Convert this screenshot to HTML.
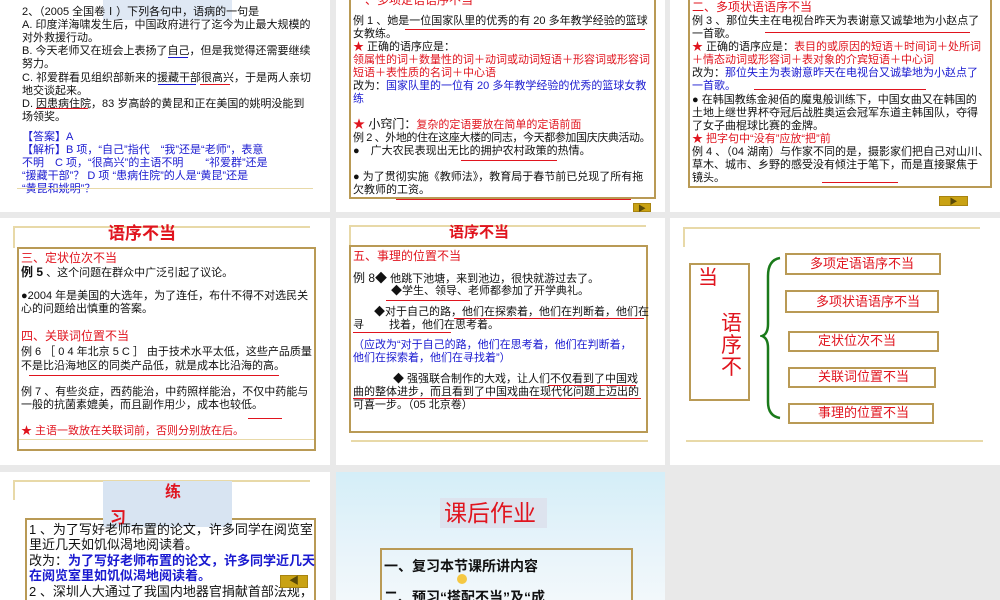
<!DOCTYPE html>
<html><head><meta charset="utf-8">
<style>
*{margin:0;padding:0;box-sizing:border-box}
body{width:1000px;height:600px;background:#e9e9e9;position:relative;overflow:hidden;font-family:"Liberation Sans","Noto Sans CJK SC",sans-serif;color:#111}
.s{position:absolute;background:#fff;overflow:hidden}
.t{position:absolute;white-space:nowrap;font-size:11px;line-height:13px}
.r{color:#e0141e}.b{color:#1a1ad0}
.box{position:absolute;border:2px solid #b99a55}
.hl{position:absolute;height:2px;background:#e8d9a8}
.vl{position:absolute;width:2px;background:#e8d9a8}
.btn{position:absolute;background:#c9a214;border:1px solid #a88410;color:#5a4a08;font-size:8px;text-align:center;line-height:9px}
.ul{position:absolute;height:1px;background:#e0141e}
.ub{position:absolute;height:1px;background:#1a1ad0}
</style></head><body>

<!-- slide 1 -->
<div class="s" style="left:0;top:0;width:330px;height:212px">
<div style="position:absolute;left:103px;top:0;width:129px;height:20px;background:#dfe8f4"></div>
<div class="t" style="left:22px;top:6px">2、（2005 全国卷Ⅰ）下列各句中，语病的一句是</div>
<div class="t" style="left:22px;top:19px">A. 印度洋海啸发生后，中国政府进行了迄今为止最大规模的</div>
<div class="t" style="left:22px;top:32px">对外救援行动。</div>
<div class="t" style="left:22px;top:45px">B. 今天老师又在班会上表扬了自己，但是我觉得还需要继续</div>
<div class="t" style="left:22px;top:58px">努力。</div>
<div class="t" style="left:22px;top:72px">C. 祁爱群看见组织部新来的援藏干部很高兴，于是两人亲切</div>
<div class="t" style="left:22px;top:85px">地交谈起来。</div>
<div class="t" style="left:22px;top:98px">D. 因患病住院，83 岁高龄的黄昆和正在美国的姚明没能到</div>
<div class="t" style="left:22px;top:111px">场领奖。</div>
<div class="t b" style="left:22px;top:131px">【答案】A</div>
<div class="t b" style="left:22px;top:144px">【解析】B 项，“自己”指代　“我”还是“老师”，表意</div>
<div class="t b" style="left:22px;top:157px">不明　C 项，“很高兴”的主语不明　　“祁爱群”还是</div>
<div class="t b" style="left:22px;top:170px">“援藏干部”？ D 项 “患病住院”的人是“黄昆”还是</div>
<div class="t b" style="left:22px;top:183px">“黄昆和姚明”？</div>
<div class="hl" style="left:17px;top:188px;width:296px;height:1px"></div>
<div class="ul" style="left:36px;top:108px;width:52px"></div>
<div class="ub" style="left:168px;top:57px;width:20px"></div>
<div class="ub" style="left:158px;top:84px;width:38px"></div>
<div class="ul" style="left:200px;top:84px;width:30px"></div>
</div>

<!-- slide 2 -->
<div class="s" style="left:336px;top:0;width:329px;height:212px">
<div class="box" style="left:13px;top:-4px;width:307px;height:203px"></div>
<div class="t r" style="left:17px;top:-6px;font-size:12px">一、多项定语语序不当</div>
<div class="t" style="left:17px;top:15px">例 1 、她是一位国家队里的优秀的有 20 多年教学经验的篮球</div>
<div class="t" style="left:17px;top:28px">女教练。</div>
<div class="t" style="left:17px;top:41px"><span class="r">★</span> 正确的语序应是：</div>
<div class="t r" style="left:17px;top:54px">领属性的词＋数量性的词＋动词或动词短语＋形容词或形容词</div>
<div class="t r" style="left:17px;top:67px">短语＋表性质的名词＋中心语</div>
<div class="t" style="left:17px;top:80px">改为：<span class="b">国家队里的一位有 20 多年教学经验的优秀的篮球女教</span></div>
<div class="t b" style="left:17px;top:93px">练</div>
<div class="t" style="left:17px;top:118px;font-size:12px"><span class="r">★</span> 小窍门：<span class="r" style="font-size:11px">复杂的定语要放在简单的定语前面</span></div>
<div class="t" style="left:17px;top:132px;letter-spacing:-0.4px">例 2 、外地的住在这座大楼的同志，今天都参加国庆庆典活动。</div>
<div class="t" style="left:17px;top:145px">●　广大农民表现出无比的拥护农村政策的热情。</div>
<div class="t" style="left:17px;top:171px">● 为了贯彻实施《教师法》，教育局于春节前已兑现了所有拖</div>
<div class="t" style="left:17px;top:184px">欠教师的工资。</div>
<div class="ul" style="left:69px;top:29px;width:240px"></div>
<div class="ul" style="left:125px;top:160px;width:96px"></div>
<div class="ul" style="left:60px;top:199px;width:235px"></div>
<div class="btn" style="left:297px;top:203px;width:18px;height:9px">▶</div>
</div>

<!-- slide 3 -->
<div class="s" style="left:670px;top:0;width:330px;height:212px">
<div class="box" style="left:18px;top:-4px;width:304px;height:192px"></div>
<div class="t r" style="left:22px;top:1px;font-size:12px">二、多项状语语序不当</div>
<div class="t" style="left:22px;top:15px">例 3 、那位失主在电视台昨天为表谢意又诚挚地为小赵点了</div>
<div class="t" style="left:22px;top:28px">一首歌。</div>
<div class="t" style="left:22px;top:41px"><span class="r">★</span> 正确的语序应是：<span class="r">表目的或原因的短语＋时间词＋处所词</span></div>
<div class="t r" style="left:22px;top:54px">＋情态动词或形容词＋表对象的介宾短语＋中心词</div>
<div class="t" style="left:22px;top:67px">改为：<span class="b">那位失主为表谢意昨天在电视台又诚挚地为小赵点了</span></div>
<div class="t b" style="left:22px;top:80px">一首歌。</div>
<div class="t" style="left:22px;top:94px">● 在韩国教练金昶佰的魔鬼般训练下，中国女曲又在韩国的</div>
<div class="t" style="left:22px;top:107px">土地上继世界杯夺冠后战胜奥运会冠军东道主韩国队，夺得</div>
<div class="t" style="left:22px;top:120px">了女子曲棍球比赛的金牌。</div>
<div class="t r" style="left:22px;top:133px">★ 把字句中“没有”应放“把”前</div>
<div class="t" style="left:22px;top:146px">例 4 、（04 湖南）与作家不同的是，摄影家们把自己对山川、</div>
<div class="t" style="left:22px;top:159px">草木、城市、乡野的感受没有倾注于笔下，而是直接聚焦于</div>
<div class="t" style="left:22px;top:172px">镜头。</div>
<div class="ul" style="left:95px;top:32px;width:205px"></div>
<div class="ul" style="left:84px;top:89px;width:172px"></div>
<div class="ul" style="left:152px;top:182px;width:76px"></div>
<div class="btn" style="left:269px;top:196px;width:29px;height:10px">▶</div>
</div>

<!-- slide 4 -->
<div class="s" style="left:0;top:218px;width:330px;height:247px">
<div class="hl" style="left:13px;top:8px;width:297px"></div>
<div class="vl" style="left:13px;top:8px;height:22px"></div>
<div class="t r" style="left:108px;top:6px;font-size:17px;line-height:20px;font-weight:bold">语序不当</div>
<div class="box" style="left:17px;top:29px;width:299px;height:204px"></div>
<div class="hl" style="left:19px;top:221px;width:295px;height:1px"></div>
<div class="t r" style="left:21px;top:33px;font-size:12px;line-height:15px">三、定状位次不当</div>
<div class="t" style="left:21px;top:48px"><b style="font-size:12px">例 5</b> 、这个问题在群众中广泛引起了议论。</div>
<div class="t" style="left:21px;top:72px">●2004 年是美国的大选年，为了连任，布什不得不对选民关</div>
<div class="t" style="left:21px;top:85px">心的问题给出慎重的答案。</div>
<div class="t r" style="left:21px;top:111px;font-size:12px;line-height:15px">四、关联词位置不当</div>
<div class="t" style="left:21px;top:128px">例 6 ［ 0 4 年北京 5 C ］ 由于技术水平太低，这些产品质量</div>
<div class="t" style="left:21px;top:142px">不是比沿海地区的同类产品低，就是成本比沿海的高。</div>
<div class="t" style="left:21px;top:168px">例 7 、有些炎症，西药能治，中药照样能治，不仅中药能与</div>
<div class="t" style="left:21px;top:181px">一般的抗菌素媲美，而且副作用少，成本也较低。</div>
<div class="t r" style="left:21px;top:207px">★ 主语一致放在关联词前，否则分别放在后。</div>
<div class="ul" style="left:29px;top:157px;width:250px"></div>
<div class="ul" style="left:248px;top:200px;width:34px"></div>
</div>

<!-- slide 5 -->
<div class="s" style="left:336px;top:218px;width:329px;height:247px">
<div class="hl" style="left:13px;top:7px;width:297px"></div>
<div class="vl" style="left:13px;top:7px;height:20px"></div>
<div class="t r" style="left:113px;top:6px;font-size:15px;line-height:18px;font-weight:bold">语序不当</div>
<div class="box" style="left:13px;top:27px;width:299px;height:188px"></div>
<div class="hl" style="left:15px;top:222px;width:297px"></div>
<div class="t r" style="left:17px;top:31px;font-size:12px;line-height:15px">五、事理的位置不当</div>
<div class="t" style="left:17px;top:54px"><span style="font-size:12px">例 8◆</span> 他跳下池塘，来到池边，很快就游过去了。</div>
<div class="t" style="left:55px;top:67px">◆学生、领导、老师都参加了开学典礼。</div>
<div class="t" style="left:38px;top:88px">◆对于自己的路，他们在探索着，他们在判断着，他们在</div>
<div class="t" style="left:17px;top:101px">寻　　 找着，他们在思考着。</div>
<div class="t b" style="left:17px;top:121px">（应改为“对于自己的路，他们在思考着，他们在判断着，</div>
<div class="t b" style="left:17px;top:134px">他们在探索着，他们在寻找着”）</div>
<div class="t" style="left:57px;top:155px">◆ 强强联合制作的大戏，让人们不仅看到了中国戏</div>
<div class="t" style="left:17px;top:168px">曲的整体进步，而且看到了中国戏曲在现代化问题上迈出的</div>
<div class="t" style="left:17px;top:181px">可喜一步。（05 北京卷）</div>
<div class="ul" style="left:50px;top:82px;width:84px"></div>
<div class="ul" style="left:118px;top:100px;width:190px"></div>
<div class="ul" style="left:17px;top:114px;width:98px"></div>
<div class="ul" style="left:212px;top:167px;width:88px"></div>
<div class="ul" style="left:17px;top:180px;width:288px"></div>
</div>

<!-- slide 6 -->
<div class="s" style="left:670px;top:218px;width:330px;height:247px">
<div class="hl" style="left:13px;top:9px;width:297px"></div>
<div class="vl" style="left:13px;top:9px;height:20px"></div>
<div class="box" style="left:19px;top:45px;width:61px;height:138px"></div>
<div class="t r" style="left:28px;top:48px;font-size:20px;line-height:24px">当</div>
<div class="t r" style="left:51px;top:95px;font-size:21px;line-height:22px;white-space:normal;width:22px">语序不</div>
<svg style="position:absolute;left:90px;top:38px" width="24" height="164" viewBox="0 0 24 164"><path d="M20 2 Q8 4 8 20 L8 68 Q8 78 2 80 Q8 82 8 92 L8 146 Q8 160 20 162" fill="none" stroke="#1a7a1a" stroke-width="2.5"/></svg>
<div class="box" style="left:115px;top:35px;width:156px;height:22px"></div>
<div class="t r" style="left:140px;top:38px;font-size:13px;line-height:16px">多项定语语序不当</div>
<div class="box" style="left:115px;top:72px;width:154px;height:23px"></div>
<div class="t r" style="left:146px;top:76px;font-size:13px;line-height:16px">多项状语语序不当</div>
<div class="box" style="left:118px;top:113px;width:151px;height:21px"></div>
<div class="t r" style="left:148px;top:115px;font-size:13px;line-height:16px">定状位次不当</div>
<div class="box" style="left:118px;top:149px;width:148px;height:21px"></div>
<div class="t r" style="left:148px;top:151px;font-size:13px;line-height:16px">关联词位置不当</div>
<div class="box" style="left:118px;top:185px;width:146px;height:21px"></div>
<div class="t r" style="left:148px;top:187px;font-size:13px;line-height:16px">事理的位置不当</div>
<div class="hl" style="left:16px;top:222px;width:297px"></div>
</div>

<!-- slide 7 -->
<div class="s" style="left:0;top:472px;width:330px;height:128px">
<div class="hl" style="left:13px;top:8px;width:297px"></div>
<div class="vl" style="left:13px;top:8px;height:20px"></div>
<div class="box" style="left:25px;top:46px;width:291px;height:90px"></div>
<div style="position:absolute;left:103px;top:9px;width:129px;height:46px;background:#d8e4f2"></div>
<div class="t r" style="left:165px;top:12px;font-size:16px;line-height:18px;font-weight:bold">练</div>
<div class="t r" style="left:110px;top:38px;font-size:16px;line-height:18px;font-weight:bold">习</div>
<div class="t" style="left:29px;top:50px;font-size:13px;line-height:15.5px">1 、为了写好老师布置的论文，许多同学在阅览室</div>
<div class="t" style="left:29px;top:65px;font-size:13px;line-height:15.5px">里近几天如饥似渴地阅读着。</div>
<div class="t" style="left:29px;top:81px;font-size:13px;line-height:15.5px">改为：<b class="b">为了写好老师布置的论文，许多同学近几天</b></div>
<div class="t b" style="left:29px;top:96px;font-size:13px;line-height:15.5px;font-weight:bold">在阅览室里如饥似渴地阅读着。</div>
<div class="t" style="left:29px;top:112px;font-size:13px;line-height:15.5px">2 、深圳人大通过了我国内地器官捐献首部法规，</div>
<div class="btn" style="left:280px;top:103px;width:28px;height:13px;font-size:10px;line-height:12px">◀</div>
</div>

<!-- slide 8 -->
<div class="s" style="left:336px;top:472px;width:329px;height:128px;background:linear-gradient(180deg,#d4eef8 0%,#e8f4fa 60%,#f2f8fb 100%)">
<div style="position:absolute;left:104px;top:26px;width:107px;height:30px;background:#dde3ee"></div>
<div class="t r" style="left:108px;top:28px;font-size:23px;line-height:27px">课后作业</div>
<div class="box" style="left:44px;top:76px;width:253px;height:60px;border-color:#b99a55"></div>
<div class="t" style="left:48px;top:85px;font-size:14px;line-height:18px;font-weight:bold">一、复习本节课所讲内容</div>
<div style="position:absolute;left:121px;top:102px;width:10px;height:10px;border-radius:50%;background:#f5c842"></div>
<div class="t" style="left:48px;top:116px;font-size:14px;line-height:18px;font-weight:bold">二、预习“搭配不当”及“成</div>
</div>

</body></html>
